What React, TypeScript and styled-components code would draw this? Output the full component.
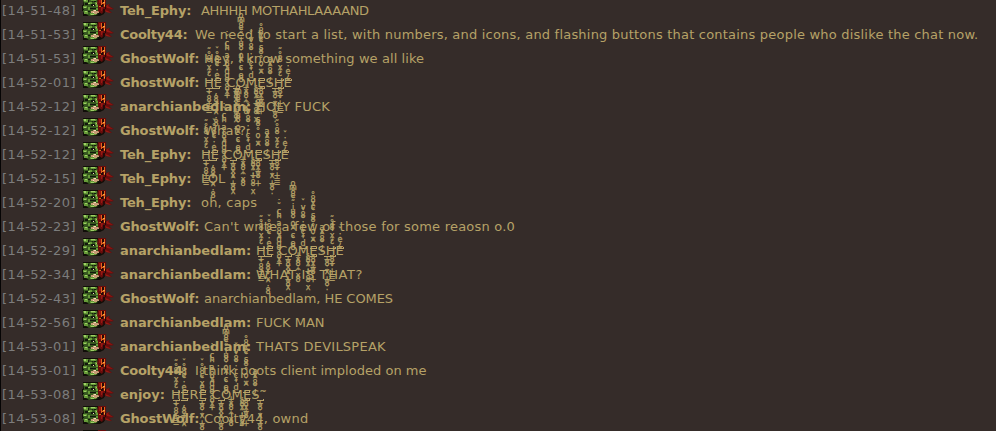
import React from 'react';
import styled, { createGlobalStyle } from 'styled-components';

const GlobalStyle = createGlobalStyle`
  body { margin: 0; background: #352c29; overflow: hidden; }
`;

const ChatLog = styled.main`
  box-sizing: border-box;
  height: 431px;
  overflow: hidden;
  border-left: 1px solid #050404;
  background: #352c29;
  color: #b6a267;
  font: 13px/26px "DejaVu Sans", sans-serif;
`;

const Rows = styled.div`
  margin-top: -2px;
`;

const Row = styled.div`
  display: flex;
  height: 24px;
  white-space: pre;
`;

const Time = styled.time`
  width: 81px;
  padding-left: 1px;
  box-sizing: border-box;
  flex: none;
  color: #7c7c7c;
  letter-spacing: 0.5px;
`;

const Avatar = styled.svg`
  flex: none;
  width: 32px;
  height: 19px;
  margin-right: 6px;
`;

const Name = styled.b<{ $width: number; $spacing: number }>`
  flex: none;
  width: ${(p) => p.$width}px;
  letter-spacing: ${(p) => p.$spacing}px;
`;

const Message = styled.span<{ $spacing: number }>`
  position: relative;
  letter-spacing: ${(p) => p.$spacing}px;
`;

const Stack = styled.span<{ $x: number; $down?: boolean }>`
  position: absolute;
  left: ${(p) => Math.round(p.$x) - 5}px;
  ${(p) => (p.$down ? 'top: 16px;' : 'bottom: 12px;')}
  width: 10px;
  display: flex;
  flex-direction: column;
  align-items: center;
  font-size: 8px;
  font-weight: 500;
  letter-spacing: 0;
  line-height: 4px;
`;

const Mark = styled.span`
  display: block;
  height: 4px;
  -webkit-text-stroke: 0.25px #b6a267;
`;

const Bar = styled.span`
  display: block;
  width: 6px;
  height: 1px;
  margin: 1px 0;
  border: solid #b6a267;
  border-width: 0 1px 1px 0;
`;

type Column = [x: number, marks: string];

const COMES_SHE_UP: Column[] = [
  [5, '˜°8ˇx¿˜_'],
  [12.7, 'ˇ°8c˜:e_'],
  [23, '˙˘ch˜a°8xdgo'],
  [37, 'om8e°˜iu8:o×˜c°e8'],
  [47, 'ˇv˜8°:rci˜d_'],
  [57, '°8xc˜s8ˇ°o:×˜_'],
  [66, 'ax°8˜¿'],
  [76, '˜°8ˇx¿˜_'],
  [84, 'ˇ:e¿_'],
];
const COMES_SHE_DOWN: Column[] = [
  [4.7, '_+˜8+=='],
  [12.3, '_˛:8+°x˜:8'],
  [23.3, '8x+ˇ'],
  [31.7, '_+8×x°+8x'],
  [41.7, '+x8:^x8'],
  [52.3, '¿8x:+°8ˇx'],
  [57.3, '_8x+8°+'],
  [70.7, '_+8:xˇ+8:'],
  [76.3, '_8+°+=='],
];
const HERE_UP: Column[] = [
  [4.7, '˜°8ˇx¿˜_'],
  [13, 'ˇ°8c˜:e_'],
  [31, 'ˇ°8c˜xe_'],
  [40.7, '˙˘ch˜a°8xdgo'],
  [54.7, 'om8e°˜iu8:o×˜c°e8'],
  [65, 'ˇv˜8°:rci˜d_'],
  [75, '°8xc˜s8ˇ°o:×˜_'],
  [84, 'ax°8˜¿'],
  [92, '~'],
];
const HERE_DOWN: Column[] = [
  [4.7, '_+˜8+=='],
  [13, '_˛:8+°x˜'],
  [31, '_+8:xˇ+8'],
  [41, '8x+ˇ'],
  [50, '_+8×x°+8'],
  [60, '+x8:^x8'],
  [71, '¿8x:+°8ˇ'],
  [75, '_8x+8°+'],
  [89, '_+8:xˇ+8'],
];

function MarkStack({ column, down }: { column: Column; down?: boolean }) {
  return (
    <Stack $x={column[0]} $down={down} aria-hidden>
      {[...column[1]].map((mark, i) => (mark === '_' ? <Bar key={i} /> : <Mark key={i}>{mark}</Mark>))}
    </Stack>
  );
}

function Orc() {
  return (
    <Avatar viewBox="0 0 32 19" aria-hidden>
      <path fill="#100e08" d="M1 0h23v6l-2 10-4 2H1v-5H0V7h1z" />
      <path fill="#36581f" d="M1 1h8l1 3 5-3 2 5v7l-2 4-8 1-6-4V9l1-2z" />
      <path fill="#669b38" d="M1 1h5v3H2zM8 1h7l-1 2H9zM7 4h3v2H7zM13 4h4v5h-3V7h-1zM1 8h4v2H1zM6 9h2v3H6zM2 13h4v3H2zM8 15h6v2H8zM14 10h3v2h-3z" />
      <path fill="#a0cf67" d="M2 1h2v2H2zM9 1h4v1H9zM6 5h2v1H6zM14 5h2v1h-2zM2 9h2v1H2zM3 13h2v1H3zM9 16h3v1H9z" />
      <path fill="#12170d" d="M6 2h1v2H6zM9 6h4v2H9zM3 5h3v2H3zM8 10h6v1H8zM6 13h2v1H6zM0 11h2v1H0zM12 3h2v1h-2zM17 9h2v6h-2z" />
      <path fill="#c79b75" d="M9 13h2v-1h3v1h3v2h-2v1h-3v-1H9z" />
      <path fill="#f4dfb8" d="M12 12h2v1h-2zM11 14h1v1h-1zM11 7h1v1h-1z" />
      <path fill="#680c0b" d="M16 0h8v7l4-1-1 2 5 3-5 1 3 3-6-1-2-2-2 4-4-3V7l-1-1z" />
      <path fill="#981813" d="M17 1h2v4h-2zM24 8l3-2-1 2 5 3-6-1zM23 12l3 1 3 2-5-1zM19 9h2l-1 4h-1z" />
      <path fill="#240a08" d="M20 1h2v3h-2zM19 6h2v3h-2zM23 7h1v4h-1zM21 11h2v4h-2z" />
      <path fill="#e0651b" d="M19 1h1v4h2V1h1v8h-1V6h-2v1h-1zM17 8h2v1h-2z" />
      <path fill="#f1a33d" d="M21 4h2v1h-2zM22 7h1v1h-1z" />
    </Avatar>
  );
}

const NAMES: Record<string, { width: number; spacing: number }> = {
  Teh_Ephy: { width: 81, spacing: -0.18 },
  Coolty44: { width: 75, spacing: -0.28 },
  GhostWolf: { width: 84, spacing: -0.16 },
  anarchianbedlam: { width: 136, spacing: -0.06 },
  enjoy: { width: 51, spacing: -0.06 },
};

interface Entry {
  time: string;
  name: string;
  text: string;
  up?: Column[];
  down?: Column[];
  spacing?: number;
}

const chant = { text: 'HE COMESHE', up: COMES_SHE_UP, down: COMES_SHE_DOWN, spacing: 0.08 };

const ENTRIES: Entry[] = [
  { time: '14-51-48', name: 'Teh_Ephy', text: 'AHHHH MOTHAHLAAAAND', spacing: -0.32 },
  { time: '14-51-53', name: 'Coolty44', text: 'We need to start a list, with numbers, and icons, and flashing buttons that contains people who dislike the chat now.' },
  { time: '14-51-53', name: 'GhostWolf', text: 'Hey, I know something we all like', spacing: 0.08 },
  { time: '14-52-01', name: 'GhostWolf', ...chant },
  { time: '14-52-12', name: 'anarchianbedlam', text: 'HOLY FUCK' },
  { time: '14-52-12', name: 'GhostWolf', text: 'What?' },
  { time: '14-52-12', name: 'Teh_Ephy', ...chant },
  { time: '14-52-15', name: 'Teh_Ephy', text: 'LOL', spacing: 0 },
  { time: '14-52-20', name: 'Teh_Ephy', text: 'oh, caps' },
  { time: '14-52-23', name: 'GhostWolf', text: "Can't write a few of those for some reaosn o.0", spacing: 0.22 },
  { time: '14-52-29', name: 'anarchianbedlam', ...chant },
  { time: '14-52-34', name: 'anarchianbedlam', text: 'WHAT IS THAT?', spacing: 0.6 },
  { time: '14-52-43', name: 'GhostWolf', text: 'anarchianbedlam, HE COMES', spacing: -0.06 },
  { time: '14-52-56', name: 'anarchianbedlam', text: 'FUCK MAN', spacing: 0 },
  { time: '14-53-01', name: 'anarchianbedlam', text: 'THATS DEVILSPEAK', spacing: 0.25 },
  { time: '14-53-01', name: 'Coolty44', text: 'I think poots client imploded on me', spacing: 0.03 },
  { time: '14-53-08', name: 'enjoy', text: 'HERE COMES', up: HERE_UP, down: HERE_DOWN, spacing: 0.25 },
  { time: '14-53-08', name: 'GhostWolf', text: 'Coolty44, ownd', spacing: 0.22 },
];

export default function App() {
  return (
    <ChatLog>
      <GlobalStyle />
      <Rows>
        {ENTRIES.map((entry, i) => (
          <Row key={i}>
            <Time>[{entry.time}]</Time>
            <Orc />
            <Name $width={NAMES[entry.name].width} $spacing={NAMES[entry.name].spacing}>{entry.name}:</Name>
            <Message $spacing={entry.spacing ?? 0.205}>
              {entry.text}
              {entry.up?.map((c, k) => <MarkStack key={`u${k}`} column={c} />)}
              {entry.down?.map((c, k) => <MarkStack key={`d${k}`} column={c} down />)}
            </Message>
          </Row>
        ))}
        <Row>
          <Time />
          <Orc />
        </Row>
      </Rows>
    </ChatLog>
  );
}
